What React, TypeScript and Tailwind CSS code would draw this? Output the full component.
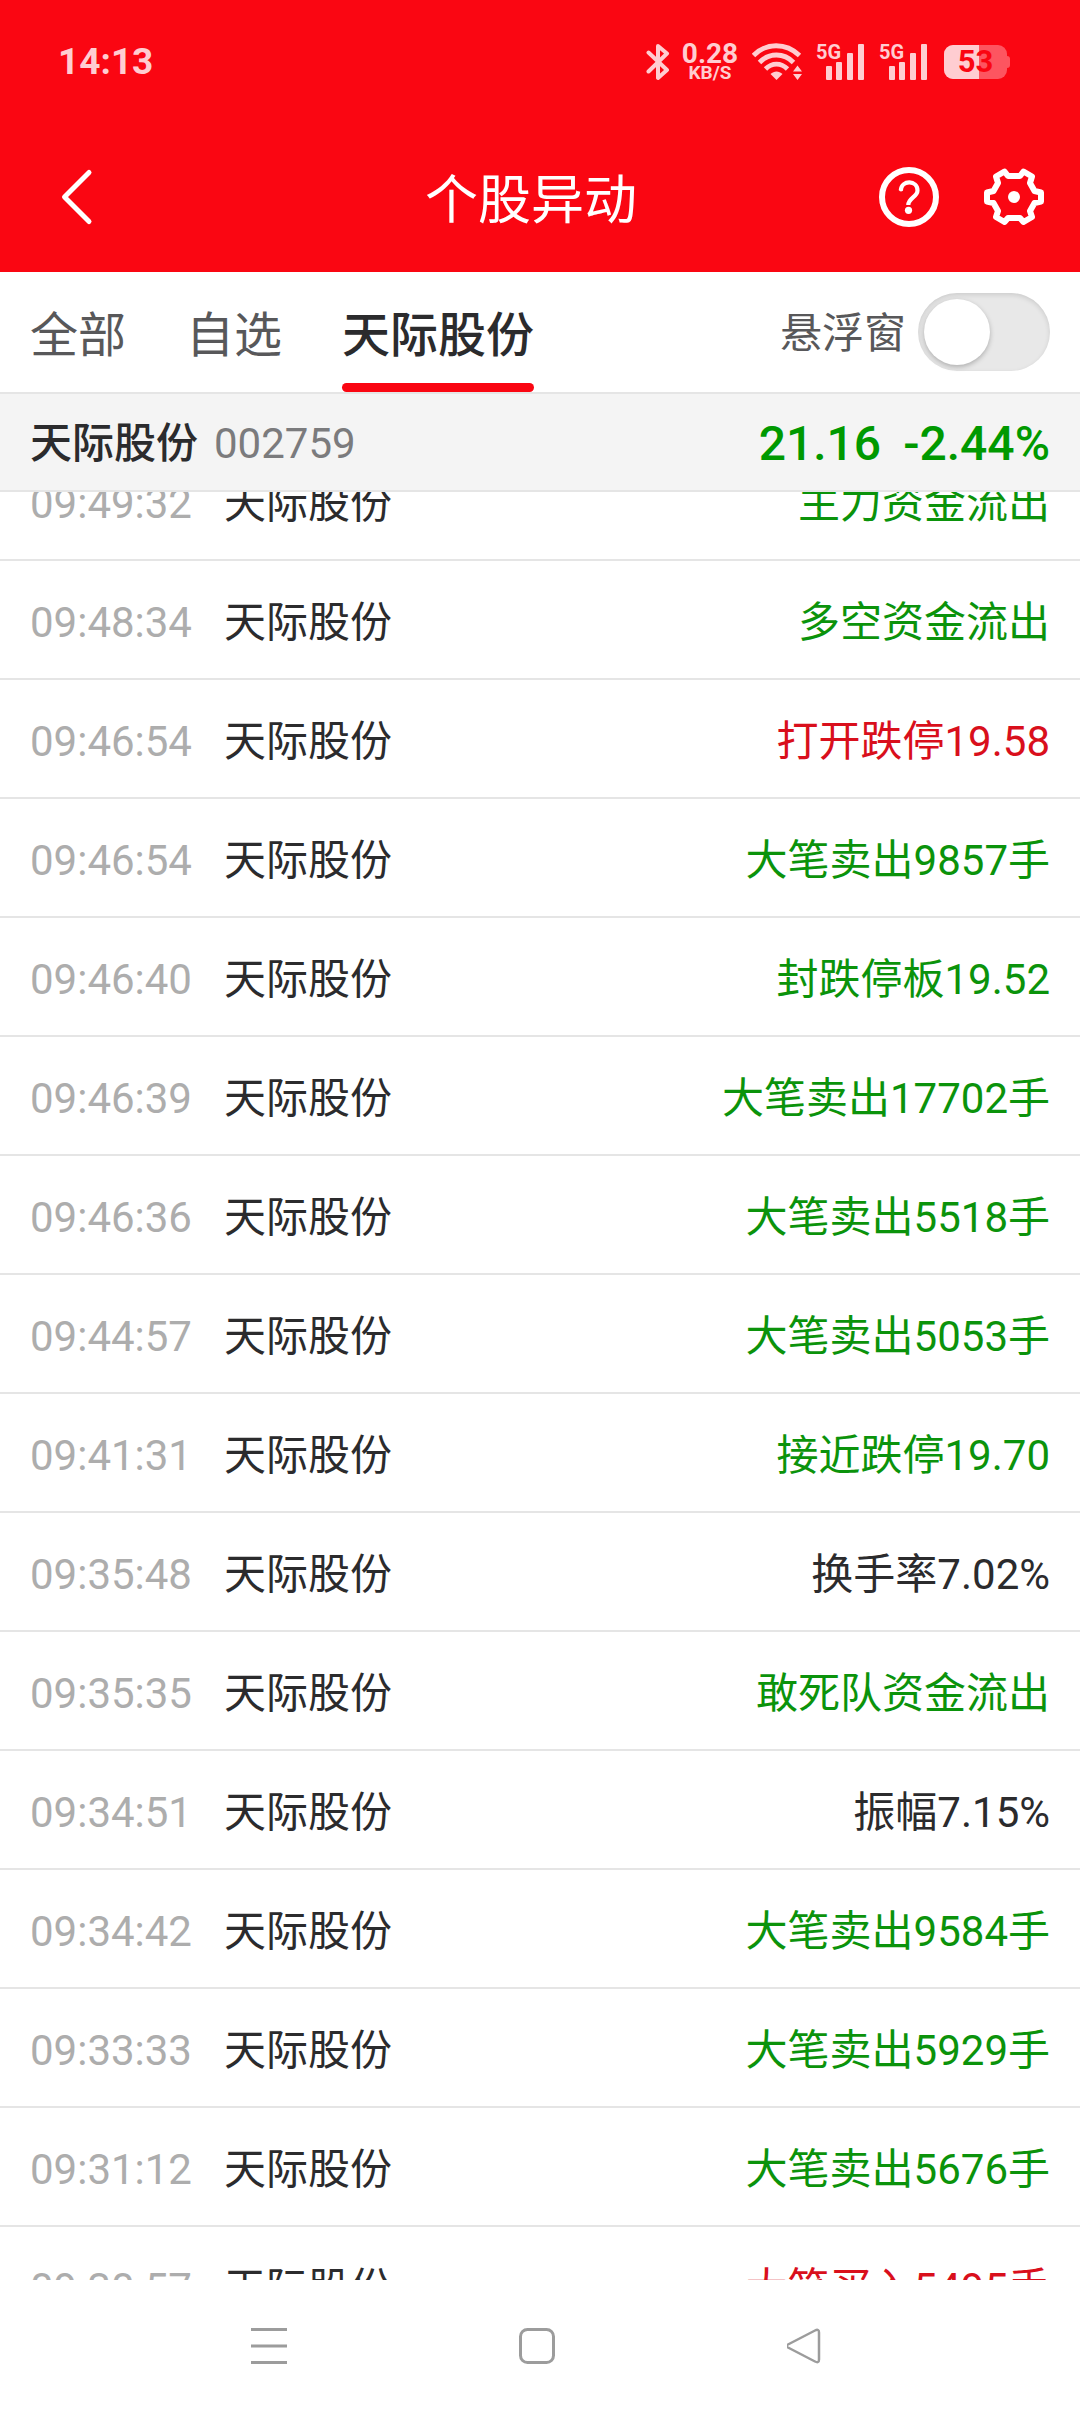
import { useState } from "react";

type Tone = "up" | "down" | "flat";

interface Alert {
  time: string;
  event: string;
  tone: Tone;
}

const toneClass: Record<Tone, string> = {
  up: "text-[#d90f1c]",
  down: "text-[#0b930b]",
  flat: "text-[#2b2b2d]",
};

const tabs = ["全部", "自选", "天际股份"];

const alerts: Alert[] = [
  { time: "09:49:32", event: "主力资金流出", tone: "down" },
  { time: "09:48:34", event: "多空资金流出", tone: "down" },
  { time: "09:46:54", event: "打开跌停19.58", tone: "up" },
  { time: "09:46:54", event: "大笔卖出9857手", tone: "down" },
  { time: "09:46:40", event: "封跌停板19.52", tone: "down" },
  { time: "09:46:39", event: "大笔卖出17702手", tone: "down" },
  { time: "09:46:36", event: "大笔卖出5518手", tone: "down" },
  { time: "09:44:57", event: "大笔卖出5053手", tone: "down" },
  { time: "09:41:31", event: "接近跌停19.70", tone: "down" },
  { time: "09:35:48", event: "换手率7.02%", tone: "flat" },
  { time: "09:35:35", event: "敢死队资金流出", tone: "down" },
  { time: "09:34:51", event: "振幅7.15%", tone: "flat" },
  { time: "09:34:42", event: "大笔卖出9584手", tone: "down" },
  { time: "09:33:33", event: "大笔卖出5929手", tone: "down" },
  { time: "09:31:12", event: "大笔卖出5676手", tone: "down" },
  { time: "09:30:57", event: "大笔买入5495手", tone: "up" },
];

function Signal() {
  return (
    <div className="relative h-[38px] w-[48px]">
      <span className="absolute left-0 top-0 text-[20px] font-bold leading-[18px]">5G</span>
      <svg viewBox="0 0 48 38" className="h-full w-full" fill="currentColor">
        <rect x="10" y="23" width="6" height="14" rx="1" />
        <rect x="20" y="19" width="6" height="18" rx="1" />
        <rect x="31" y="10" width="6" height="27" rx="1" />
        <rect x="42" y="1" width="6" height="36" rx="1" />
      </svg>
    </div>
  );
}

function Battery() {
  return (
    <div className="relative flex h-[34px] w-[66px] items-center">
      <div className="flex h-full w-[63px] overflow-hidden rounded-[9px] bg-[#fd5560]">
        <div className="w-[35px] bg-[#ffcdd1]" />
      </div>
      <div className="h-[12px] w-[3px] rounded-r-[3px] bg-[#fd5560]" />
      <span className="absolute inset-y-0 left-0 w-[63px] text-center text-[31px] font-bold leading-[34px] text-[#fa0612]">
        53
      </span>
    </div>
  );
}

function StatusBar() {
  return (
    <div className="flex h-[122px] items-center justify-between pl-[58px] pr-[70px] pt-[2px] text-[#ffcdd1]">
      <span className="text-[37px] font-bold leading-[48px]">14:13</span>
      <div className="flex items-center">
        <svg viewBox="0 0 24 38" className="h-[38px] w-[24px]" fill="none" stroke="currentColor" strokeWidth="4" strokeLinejoin="round" strokeLinecap="round">
          <path d="M2.500 9.500 L21 27 L12 35 V3 L21 10.500 L2.500 28.500" />
        </svg>
        <div className="ml-[12px] flex w-[56px] flex-col items-center font-bold">
          <span className="text-[28px] leading-[22px]">0.28</span>
          <span className="text-[19px] leading-[16px]">KB/S</span>
        </div>
        <svg viewBox="0 0 50 38" className="ml-[14px] h-[38px] w-[50px]" fill="none" stroke="currentColor" strokeWidth="4.800">
          <path d="M1.500 12.500 C14 -0.500 34 -0.500 47.500 12.500" />
          <path d="M7.500 19.500 C17 9.500 32 9.500 41.500 19.500" />
          <path d="M13.500 26 C20 19.500 29 19.500 35.500 26" />
          <path d="M24.500 37 L18.500 31 C22 27.500 27 27.500 30.500 31 Z" fill="currentColor" stroke="none" />
          <path d="M45.500 22.500 L50 28.500 H41 Z M45.500 37 L50 31 H41 Z" fill="currentColor" stroke="none" />
        </svg>
        <div className="ml-[14px] flex gap-[15px]">
          <Signal />
          <Signal />
        </div>
        <div className="ml-[17px]">
          <Battery />
        </div>
      </div>
    </div>
  );
}

function TitleBar() {
  return (
    <div className="flex h-[150px] items-center text-white">
      <div className="flex w-[183px] pl-[48px]">
        <button aria-label="返回" className="flex h-[60px] w-[60px] items-center justify-center">
          <svg viewBox="0 0 60 60" className="h-[60px] w-[60px]" fill="none" stroke="currentColor" strokeWidth="5" strokeLinecap="round" strokeLinejoin="round">
            <path d="M41 5.500 L16.500 30 L41 54.500" />
          </svg>
        </button>
      </div>
      <h1 className="flex-1 pt-2 text-center text-[53px] leading-[72px]">个股异动</h1>
      <div className="flex gap-[45px] pr-[36px]">
        <button aria-label="帮助" className="h-[60px] w-[60px]">
          <svg viewBox="0 0 60 60" className="h-[60px] w-[60px]" fill="none" stroke="currentColor" strokeLinecap="round">
            <circle cx="30" cy="30" r="27" strokeWidth="6" />
            <path d="M21.800 23.500 C22.500 12.500 38.500 13 38.500 23.500 C38.500 30 29.300 31 29.300 38" strokeWidth="4.200" strokeLinecap="butt" />
            <circle cx="22" cy="22.500" r="2" fill="currentColor" stroke="none" />
            <circle cx="29.500" cy="43.300" r="3.600" fill="currentColor" stroke="none" />
          </svg>
        </button>
        <button aria-label="设置" className="h-[60px] w-[60px]">
          <svg viewBox="0 0 60 60" className="h-[60px] w-[60px]" fill="none" stroke="currentColor" strokeWidth="6" strokeLinejoin="round">
            <path d="M24 9 H36 L39.500 4.500 L48 9.500 L46 16 L50.500 24 L57 25.500 V34.500 L50.500 36 L46 44 L48 50 L39.500 55 L36 51 H24 L20.500 55 L12 50 L14 44 L9.500 36 L3 34.500 V25.500 L9.500 24 L14 16 L12 9.500 L20.500 4.500 Z" />
            <circle cx="30" cy="30" r="6" fill="currentColor" stroke="none" />
          </svg>
        </button>
      </div>
    </div>
  );
}

export default function App() {
  const [active, setActive] = useState("天际股份");
  const [floating, setFloating] = useState(false);

  return (
    <div className="flex h-screen flex-col bg-white font-['Roboto','Noto_Sans_CJK_SC',sans-serif] text-[#2b2b2d]">
      <header className="bg-[#fa0612]">
        <StatusBar />
        <TitleBar />
      </header>

      {/* Tabs + floating window switch */}
      <div className="flex h-[122px] items-stretch justify-between border-b-2 border-[#e5e5e5] px-[30px]">
        <nav className="flex gap-[60px]">
          {tabs.map((tab) => (
            <button
              key={tab}
              onClick={() => setActive(tab)}
              className={
                tab === active
                  ? "relative pt-[8px] text-[48px] font-medium leading-[72px]"
                  : "relative pt-[8px] text-[48px] leading-[72px] text-[#58585a]"
              }
            >
              {tab}
              {tab === active && (
                <span className="absolute inset-x-0 bottom-0 h-[9px] rounded-full bg-[#fa0612]" />
              )}
            </button>
          ))}
        </nav>
        <label className="flex items-center gap-[12px] text-[42px] leading-[60px] text-[#58585a]">
          <span className="pt-1">悬浮窗</span>
          <input
            type="checkbox"
            checked={floating}
            onChange={(e) => setFloating(e.target.checked)}
            className="flex h-[78px] w-[132px] appearance-none items-center rounded-full bg-[#e8e8e8] px-[6px] shadow-[inset_0_2px_5px_rgba(0,0,0,0.12)] before:h-[66px] before:w-[66px] before:rounded-full before:bg-white before:shadow-[0_2px_5px_rgba(0,0,0,0.25)] before:content-[''] checked:justify-end checked:bg-[#fa0612]"
          />
        </label>
      </div>

      {/* Current quote */}
      <div className="flex h-[98px] items-center justify-between border-b-2 border-[#e5e5e5] bg-[#f4f4f4] px-[30px] pt-1">
        <div className="flex items-center gap-[16px] text-[42px] leading-[60px]">
          <span className="font-medium">天际股份</span>
          <span className="text-[#7b7b7d]">002759</span>
        </div>
        <div className="flex gap-[22px] text-[48px] font-medium leading-[60px] text-[#009900]">
          <span>21.16</span>
          <span>-2.44%</span>
        </div>
      </div>

      {/* Alert feed, scrolled part of a row down */}
      <main className="min-h-0 flex-1 overflow-hidden">
        <ul className="-mt-[50px]">
          {alerts.map((alert, i) => (
            <li
              key={i}
              className="flex h-[119px] items-center border-b-2 border-[#e5e5e5] px-[30px] pt-[6px] text-[42px] leading-[60px]"
            >
              <time className="w-[194px] text-[#adadad]">{alert.time}</time>
              <span>天际股份</span>
              <span className={`ml-auto ${toneClass[alert.tone]}`}>{alert.event}</span>
            </li>
          ))}
        </ul>
      </main>

      <footer className="grid h-[132px] shrink-0 grid-cols-3 items-center justify-items-center bg-white pl-[135px] pr-[141px] text-[#9c9c9c]">
        <button aria-label="最近任务">
          <svg viewBox="0 0 36 36" className="h-[36px] w-[36px]" fill="none" stroke="currentColor" strokeWidth="3">
            <path d="M0 1.500 H36 M0 18 H36 M0 34.500 H36" />
          </svg>
        </button>
        <button aria-label="主页">
          <svg viewBox="0 0 36 36" className="h-[36px] w-[36px]" fill="none" stroke="currentColor" strokeWidth="3">
            <rect x="1.500" y="1.500" width="33" height="33" rx="7" />
          </svg>
        </button>
        <button aria-label="返回上一页">
          <svg viewBox="0 0 36 36" className="h-[36px] w-[36px]" fill="none" stroke="currentColor" strokeWidth="2.500">
            <path d="M1 16.500 Q-1.500 18 1 19.500 L28 33.500 Q32 35.500 32 31.500 V4.500 Q32 0.500 28 2.500 Z" />
          </svg>
        </button>
      </footer>
    </div>
  );
}
